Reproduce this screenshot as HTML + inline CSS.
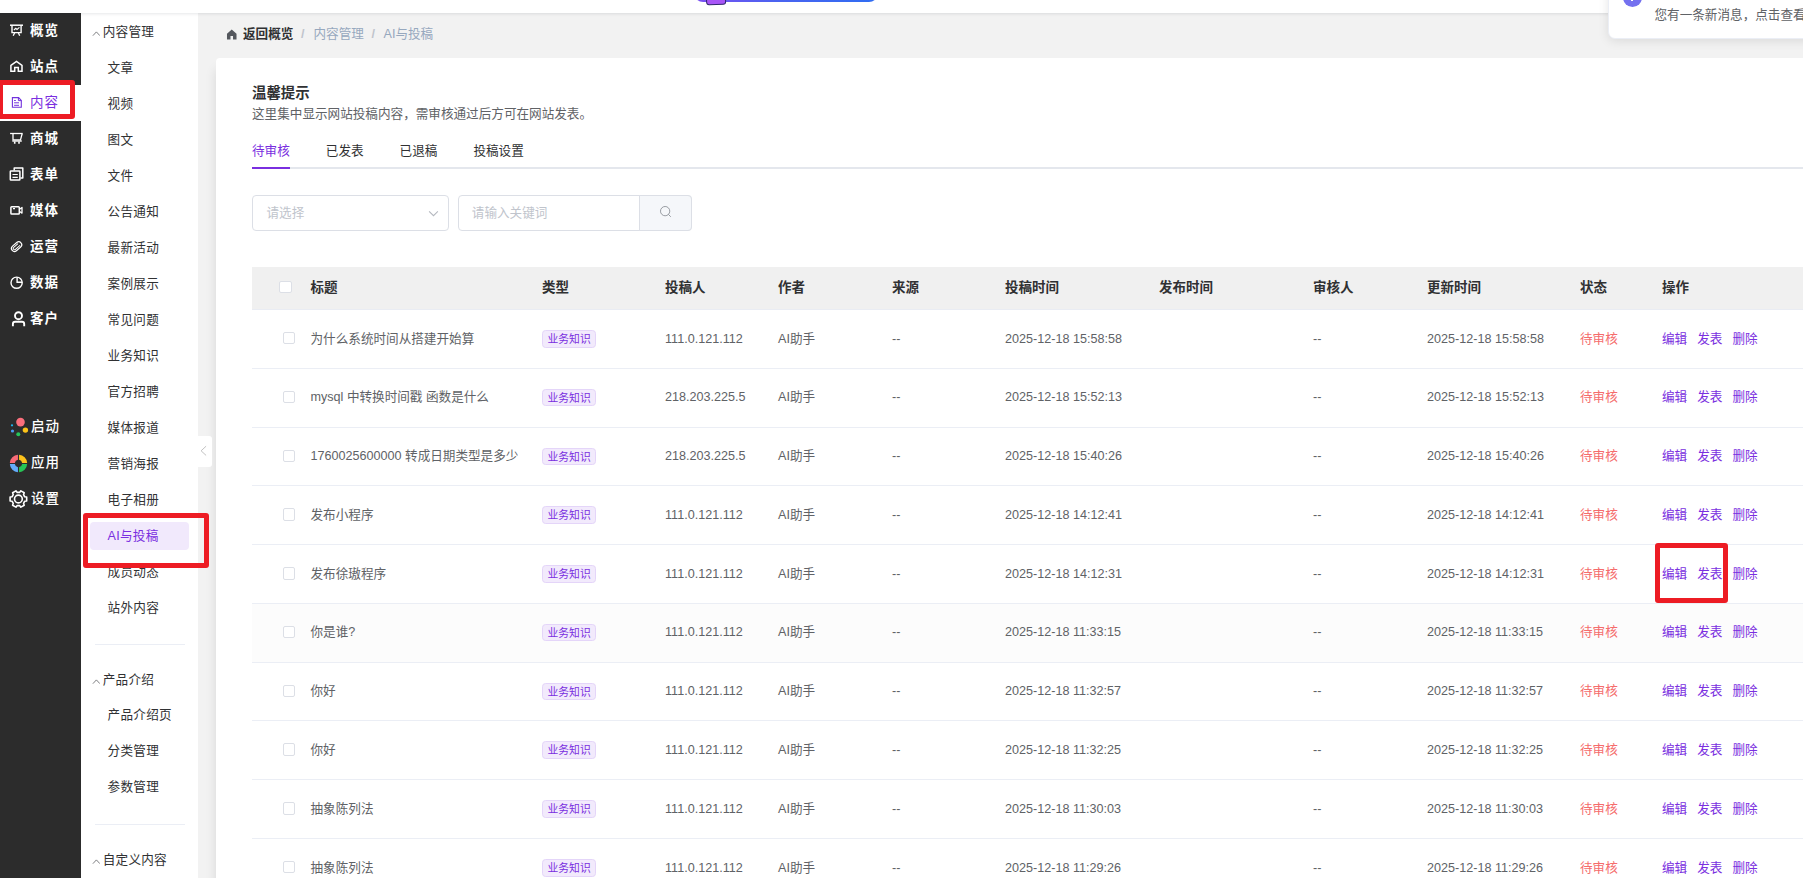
<!DOCTYPE html>
<html lang="zh-CN">
<head>
<meta charset="utf-8">
<title>AI与投稿</title>
<style>
*{box-sizing:border-box;margin:0;padding:0}
html,body{width:1803px;height:878px;overflow:hidden}
body{position:relative;background:#f2f2f2;font-family:"Liberation Sans","Noto Sans CJK SC",sans-serif;font-size:12.6px;color:#606266;}
.abs{position:absolute}
/* top strip */
#top{position:absolute;left:0;top:0;width:1803px;height:13px;background:#fff;box-shadow:0 1px 3px rgba(0,21,41,.1);z-index:5}
#pill{position:absolute;left:694px;top:-22px;width:184px;height:23.6px;border-radius:9px;background:linear-gradient(90deg,#7b4ff2 0%,#4a63f0 45%,#2f6df2 100%)}
#pillsq{position:absolute;left:706px;top:-8px;width:20px;height:13px;border-radius:3px;background:#a855f7;border:1.6px solid #2f2570;transform:rotate(-2deg)}
/* primary sidebar */
#side1{position:absolute;left:0;top:13px;width:81px;height:865px;background:#2c2c2c;z-index:2}
.m1{position:absolute;left:0;width:81px;height:36px;color:#fff;font-size:13.5px;font-weight:700;line-height:36px;letter-spacing:.9px}
.m1 span{position:absolute;left:30px;top:0;white-space:nowrap}
.m1 svg{position:absolute;left:0;top:0;width:81px;height:36px}
.m1 span.md{font-weight:500;left:31px}
.m1.on{background:#fff;color:#7a2fe0;font-weight:400}
/* secondary sidebar */
#side2{position:absolute;left:81px;top:13px;width:117px;height:865px;background:#fff;z-index:1}
.g{position:absolute;left:21.7px;letter-spacing:.25px;font-size:12.6px;color:#303133;line-height:18px;white-space:nowrap}
.g svg{position:absolute;left:-11px;top:7.6px;width:8.8px;height:5.4px}
.m2{position:absolute;left:26.6px;letter-spacing:.25px;font-size:12.6px;color:#303133;line-height:18px;white-space:nowrap;margin-top:.5px}
.hr2{position:absolute;left:14px;width:90px;height:1px;background:#ebeef5}
#act2{position:absolute;left:9px;top:509px;width:99px;height:28px;border-radius:4px;background:#f1e9fc}
.red{position:absolute;border:5px solid #ed1c24;border-radius:3px;z-index:9}

/* main */
#main{position:absolute;left:198px;top:13px;width:1605px;height:865px}
#crumb{position:absolute;left:28px;top:12px;height:18px;line-height:18px;font-size:12.6px;white-space:nowrap}
#crumb .home{position:absolute;left:0;top:4px;width:11.5px;height:11px}
#crumb span{position:absolute;top:0}
#crumb .c0{left:17px;font-weight:700;color:#303133}
#crumb .c1{color:#97a8be}
#crumb .sep{color:#c0c4cc;font-weight:700}
#card{position:absolute;left:18px;top:45px;width:1700px;height:900px;background:#fff;border-radius:4px;box-shadow:0 11px 12px rgba(0,0,0,.11)}
#tip-t{position:absolute;left:36px;top:25px;font-size:14.4px;font-weight:700;color:#303133;line-height:20px;white-space:nowrap}
#tip-d{position:absolute;left:36px;top:47px;font-size:12.6px;color:#606266;line-height:18px;white-space:nowrap}
#tabs{position:absolute;left:36px;top:74px;width:1664px;height:37px}
.tab{position:absolute;top:9.5px;line-height:18px;color:#303133;white-space:nowrap}
.tab.on{color:#7a2fe0}
#tabline{position:absolute;left:0;top:35px;width:1664px;height:2px;background:#e4e7ed}
#tabbar{position:absolute;left:0;top:35px;width:38px;height:2px;background:#7a2fe0}
#sel{position:absolute;left:36px;top:137px;width:197px;height:36px;border:1px solid #dcdfe6;border-radius:4px;line-height:34px}
#sel span,#inp span{position:absolute;left:13.5px;top:0;color:#c0c4cc;white-space:nowrap}
#sel svg{position:absolute;right:9px;top:14px;width:11px;height:7px}
#inp{position:absolute;left:242px;top:137px;width:234px;height:36px;border:1px solid #dcdfe6;border-radius:4px;line-height:34px}
#sbtn{position:absolute;right:-1px;top:-1px;width:53px;height:36px;background:#f5f7fa;border:1px solid #dcdfe6;border-radius:0 4px 4px 0}
#sbtn svg{position:absolute;left:19px;top:9px;width:13px;height:13px}
#thead{position:absolute;left:36px;top:209px;width:1664px;height:43px;background:#f0f0f0;border-bottom:1px solid #e9ecf3}
#thead b{position:absolute;top:12px;line-height:18px;font-size:13.5px;color:#303133;font-weight:700;white-space:nowrap}
.cb{position:absolute;width:12.4px;height:12.4px;border:1px solid #dcdfe6;border-radius:2px;background:#fff}
.tr{position:absolute;left:36px;width:1664px;height:58.78px;border-bottom:1px solid #ebeef5}
.tr.hov{background:#fcfcfc}
.tr .cb{left:31px;top:22px}
.tr span,.tr a{position:absolute;top:19.5px;line-height:18px;white-space:nowrap;color:#606266}
.tr a{color:#7a2fe0}
.tr .st{color:#f56c6c}
.tr em{position:absolute;left:290px;top:20px;height:17.5px;padding:0 4.5px;font-style:normal;font-size:10.8px;line-height:16px;color:#7a2fe0;background:#f2eafc;border:1px solid #e4d5f9;border-radius:3.6px;white-space:nowrap}

#handle{position:absolute;left:198px;top:436px;width:14px;height:31px;background:#fff;border-radius:0 3px 3px 0;z-index:3}
#handle svg{position:absolute;left:2.2px;top:9px;width:7.4px;height:11.6px}
#notice{position:absolute;left:1608.3px;top:-30px;width:300px;height:68.5px;background:#fff;border:1px solid #ebeef5;border-radius:7px;box-shadow:0 2px 11px rgba(0,0,0,.1);z-index:8}
#nico{position:absolute;left:13.4px;top:16.5px;width:19px;height:19px;border-radius:50%;background:#7471ef}
#nico i{position:absolute;left:8.6px;top:9px;width:1.5px;height:4.6px;background:#fff}
#notice span{position:absolute;left:45.2px;top:35px;line-height:18px;color:#606266;white-space:nowrap}
</style>
</head>
<body>
<div id="top"><div id="pill"></div><div id="pillsq"></div></div>

<div id="side1">
  <div class="m1" style="top:0"><svg viewBox="0 0 81 36"><g stroke="#fff" fill="none" stroke-width="1.4"><path d="M10,12.2H23" stroke-width="1.5"/><path d="M12,12.2V19.6H21.1V12.2"/><path d="M13.9,17 15.8,15.3 17,16.4 19.4,14.3" stroke-width="1.1"/><path d="M14.7,19.8 13.2,22.8M18.3,19.8 19.7,22.8" stroke-width="1.3"/></g></svg><span>概览</span></div>
  <div class="m1" style="top:36px"><svg viewBox="0 0 81 36"><g stroke="#fff" fill="none" stroke-width="1.5"><path d="M10.9,22.2V16.3L16.5,12.3L22,16.3V22.2H18.3V18.4H14.7V22.2Z"/></g></svg><span>站点</span></div>
  <div class="m1 on" style="top:72px"><svg viewBox="0 0 81 36"><g stroke="#7232dd" fill="none" stroke-width="1.1"><path d="M12.4,12.6H18.6L21.3,15.4V22.3H12.4Z"/><path d="M18.4,12.6V15.6H21.3" stroke-width="1"/><path d="M14.1,15.5H15.8M14.1,17.8H19M14.1,20.3H19" stroke-width="1"/></g></svg><span>内容</span></div>
  <div class="m1" style="top:108px"><svg viewBox="0 0 81 36"><g stroke="#fff" fill="none" stroke-width="1.3"><path d="M10.1,12.5H22.6"/><path d="M13,12.5V18.9H20.5L22.2,12.5"/><path d="M12.3,20H21.8" stroke-width="1.4"/><path d="M14.7,20.4V22.8M19,20.4V22.8" stroke-width="1.6"/></g></svg><span>商城</span></div>
  <div class="m1" style="top:144px"><svg viewBox="0 0 81 36"><g stroke="#fff" fill="none" stroke-width="1.5" stroke-linejoin="round"><rect x="10.3" y="14" width="9.6" height="9" rx=".6"/><path d="M14.2,13.6V11.1H22.8V21H20.4"/><path d="M12.5,17.5H17.8M12.5,20.3H17.8" stroke-width="1.2"/></g></svg><span>表单</span></div>
  <div class="m1" style="top:180px"><svg viewBox="0 0 81 36"><g stroke="#fff" fill="none" stroke-width="1.5" stroke-linejoin="round"><rect x="10.9" y="10.7" width="8.4" height="7.4" rx=".8" transform="translate(0,3)"/><path d="M19.6,16.2 22,14.5V20.1L19.6,18.5" stroke-width="1.3"/><path d="M13,15.6H15" stroke-width="1.1"/></g></svg><span>媒体</span></div>
  <div class="m1" style="top:216px"><svg viewBox="0 0 81 36"><g stroke="#fff" fill="none" stroke-width="1.15" transform="rotate(-41 16.6 17.6)"><rect x="10.8" y="14.6" width="11.6" height="6" rx="3"/><path d="M19.6,16.3H13.9a1.3,1.3 0 0 0 0,2.6H20" stroke-width="1"/></g></svg><span>运营</span></div>
  <div class="m1" style="top:252px"><svg viewBox="0 0 81 36"><g stroke="#fff" fill="none" stroke-width="1.4"><circle cx="16.6" cy="17.7" r="5.6"/><path d="M17.1,12.3V17.3H22.3"/></g></svg><span>数据</span></div>
  <div class="m1" style="top:288px"><svg viewBox="0 0 81 36"><g stroke="#fff" fill="none" stroke-width="1.9"><circle cx="18.5" cy="14.7" r="3.5"/><path d="M12.9,25.3V23a2.2,2.2 0 0 1 2.2,-2.2H22a2.2,2.2 0 0 1 2.2,2.2V25.3"/></g></svg><span>客户</span></div>
  <div class="m1" style="top:396px"><svg viewBox="0 0 81 36"><circle cx="20.5" cy="13.1" r="4.3" fill="#fb6f7c"/><circle cx="25.4" cy="21.1" r="2.7" fill="#fcc419"/><circle cx="18.3" cy="25.3" r="2" fill="#24c45a"/><circle cx="12.5" cy="22" r="1.6" fill="#4c9cf5"/><circle cx="12" cy="16.3" r="1.1" fill="#1fb6f2"/></svg><span class="md">启动</span></div>
  <div class="m1" style="top:432px"><svg viewBox="0 0 81 36"><path d="M9.82,17.95 A8.7,8.7 0 0 1 17.95,9.82 L17.95,14.84 A3.7,3.7 0 0 0 14.84,17.95Z" fill="#f86b78"/><path d="M19.05,9.82 A8.7,8.7 0 0 1 27.18,17.95 L22.16,17.95 A3.7,3.7 0 0 0 19.05,14.84Z" fill="#fcc21b"/><path d="M27.18,19.05 A8.7,8.7 0 0 1 19.05,27.18 L19.05,22.16 A3.7,3.7 0 0 0 22.16,19.05Z" fill="#27c556"/><path d="M17.95,27.18 A8.7,8.7 0 0 1 9.82,19.05 L14.84,19.05 A3.7,3.7 0 0 0 17.95,22.16Z" fill="#64acfa"/></svg><span class="md">应用</span></div>
  <div class="m1" style="top:468px"><svg viewBox="0 0 81 36"><g stroke="#fff" fill="none" stroke-width="1.6" stroke-linejoin="round"><path d="M24.70,15.73 L26.68,16.06 L26.68,19.94 L24.70,20.27 L23.52,22.32 L24.22,24.20 L20.86,26.14 L19.59,24.59 L17.21,24.59 L15.94,26.14 L12.58,24.20 L13.28,22.32 L12.10,20.27 L10.12,19.94 L10.12,16.06 L12.10,15.73 L13.28,13.68 L12.58,11.80 L15.94,9.86 L17.21,11.41 L19.59,11.41 L20.86,9.86 L24.22,11.80 L23.52,13.68Z"/><circle cx="18.4" cy="18" r="3.9"/></g></svg><span class="md">设置</span></div>
</div>

<div id="side2">
  <div id="act2"></div>
  <div class="g" style="top:10px"><svg viewBox="0 0 9 6"><path d="M.6,5.2 4.5,1 8.4,5.2" fill="none" stroke="#606266" stroke-width=".9"/></svg>内容管理</div>
  <div class="m2" style="top:45px">文章</div>
  <div class="m2" style="top:81px">视频</div>
  <div class="m2" style="top:117px">图文</div>
  <div class="m2" style="top:153px">文件</div>
  <div class="m2" style="top:189px">公告通知</div>
  <div class="m2" style="top:225px">最新活动</div>
  <div class="m2" style="top:261px">案例展示</div>
  <div class="m2" style="top:297px">常见问题</div>
  <div class="m2" style="top:333px">业务知识</div>
  <div class="m2" style="top:369px">官方招聘</div>
  <div class="m2" style="top:405px">媒体报道</div>
  <div class="m2" style="top:441px">营销海报</div>
  <div class="m2" style="top:477px">电子相册</div>
  <div class="m2" style="top:513px;color:#7a2fe0">AI与投稿</div>
  <div class="m2" style="top:549px">成员动态</div>
  <div class="m2" style="top:585px">站外内容</div>
  <div class="hr2" style="top:631px"></div>
  <div class="g" style="top:658px"><svg viewBox="0 0 9 6"><path d="M.6,5.2 4.5,1 8.4,5.2" fill="none" stroke="#606266" stroke-width=".9"/></svg>产品介绍</div>
  <div class="m2" style="top:692px">产品介绍页</div>
  <div class="m2" style="top:728px">分类管理</div>
  <div class="m2" style="top:764px">参数管理</div>
  <div class="hr2" style="top:811px"></div>
  <div class="g" style="top:838px"><svg viewBox="0 0 9 6"><path d="M.6,5.2 4.5,1 8.4,5.2" fill="none" stroke="#606266" stroke-width=".9"/></svg>自定义内容</div>
</div>

<div id="main">
  <div id="crumb">
    <svg class="home" viewBox="0 0 12 12"><path d="M6 .6 11.2 5.2V11.4H7.4V7.6H4.6V11.4H.8V5.2Z" fill="#55585e"/></svg>
    <span class="c0">返回概览</span><span class="sep" style="left:75px">/</span><span class="c1" style="left:87.5px">内容管理</span><span class="sep" style="left:145.5px">/</span><span class="c1" style="left:157.5px">AI与投稿</span>
  </div>
  <div id="card">
    <div id="tip-t">温馨提示</div>
    <div id="tip-d">这里集中显示网站投稿内容，需审核通过后方可在网站发表。</div>
    <div id="tabs">
      <span class="tab on" style="left:0">待审核</span>
      <span class="tab" style="left:73.8px">已发表</span>
      <span class="tab" style="left:147.6px">已退稿</span>
      <span class="tab" style="left:221.4px">投稿设置</span>
      <div id="tabline"></div><div id="tabbar"></div>
    </div>
    <div id="sel"><span>请选择</span><svg viewBox="0 0 12 8"><path d="M1 1.5 6 6.5 11 1.5" fill="none" stroke="#b4b8bf" stroke-width="1.2"/></svg></div>
    <div id="inp"><span style="left:12.8px">请输入关键词</span><div id="sbtn"><svg viewBox="0 0 14 14"><circle cx="6.6" cy="6.6" r="5" fill="none" stroke="#90949b" stroke-width="1"/><path d="M10.3 10.3 12.4 12.4" stroke="#90949b" stroke-width="1" stroke-linecap="round"/></svg></div></div>
    <div id="thead">
      <i class="cb" style="left:27px;top:14px;width:12.8px"></i>
      <b style="left:58.5px">标题</b><b style="left:290px">类型</b><b style="left:413px">投稿人</b><b style="left:526px">作者</b><b style="left:640px">来源</b><b style="left:753px">投稿时间</b><b style="left:907px">发布时间</b><b style="left:1061px">审核人</b><b style="left:1175px">更新时间</b><b style="left:1328px">状态</b><b style="left:1410px">操作</b>
    </div>
    <div class="tr" style="top:252.00px"><i class="cb"></i><span style="left:58.5px">为什么系统时间从搭建开始算</span><em>业务知识</em><span style="left:413px">111.0.121.112</span><span style="left:526px">AI助手</span><span style="left:640px">--</span><span style="left:753px">2025-12-18 15:58:58</span><span style="left:1061px">--</span><span style="left:1175px">2025-12-18 15:58:58</span><span class="st" style="left:1328px">待审核</span><a style="left:1410px">编辑</a><a style="left:1445.2px">发表</a><a style="left:1480.4px">删除</a></div>
    <div class="tr" style="top:310.78px"><i class="cb"></i><span style="left:58.5px">mysql 中转换时间戳 函数是什么</span><em>业务知识</em><span style="left:413px">218.203.225.5</span><span style="left:526px">AI助手</span><span style="left:640px">--</span><span style="left:753px">2025-12-18 15:52:13</span><span style="left:1061px">--</span><span style="left:1175px">2025-12-18 15:52:13</span><span class="st" style="left:1328px">待审核</span><a style="left:1410px">编辑</a><a style="left:1445.2px">发表</a><a style="left:1480.4px">删除</a></div>
    <div class="tr" style="top:369.56px"><i class="cb"></i><span style="left:58.5px">1760025600000 转成日期类型是多少</span><em>业务知识</em><span style="left:413px">218.203.225.5</span><span style="left:526px">AI助手</span><span style="left:640px">--</span><span style="left:753px">2025-12-18 15:40:26</span><span style="left:1061px">--</span><span style="left:1175px">2025-12-18 15:40:26</span><span class="st" style="left:1328px">待审核</span><a style="left:1410px">编辑</a><a style="left:1445.2px">发表</a><a style="left:1480.4px">删除</a></div>
    <div class="tr" style="top:428.34px"><i class="cb"></i><span style="left:58.5px">发布小程序</span><em>业务知识</em><span style="left:413px">111.0.121.112</span><span style="left:526px">AI助手</span><span style="left:640px">--</span><span style="left:753px">2025-12-18 14:12:41</span><span style="left:1061px">--</span><span style="left:1175px">2025-12-18 14:12:41</span><span class="st" style="left:1328px">待审核</span><a style="left:1410px">编辑</a><a style="left:1445.2px">发表</a><a style="left:1480.4px">删除</a></div>
    <div class="tr" style="top:487.12px"><i class="cb"></i><span style="left:58.5px">发布徐璈程序</span><em>业务知识</em><span style="left:413px">111.0.121.112</span><span style="left:526px">AI助手</span><span style="left:640px">--</span><span style="left:753px">2025-12-18 14:12:31</span><span style="left:1061px">--</span><span style="left:1175px">2025-12-18 14:12:31</span><span class="st" style="left:1328px">待审核</span><a style="left:1410px">编辑</a><a style="left:1445.2px">发表</a><a style="left:1480.4px">删除</a></div>
    <div class="tr hov" style="top:545.90px"><i class="cb"></i><span style="left:58.5px">你是谁?</span><em>业务知识</em><span style="left:413px">111.0.121.112</span><span style="left:526px">AI助手</span><span style="left:640px">--</span><span style="left:753px">2025-12-18 11:33:15</span><span style="left:1061px">--</span><span style="left:1175px">2025-12-18 11:33:15</span><span class="st" style="left:1328px">待审核</span><a style="left:1410px">编辑</a><a style="left:1445.2px">发表</a><a style="left:1480.4px">删除</a></div>
    <div class="tr" style="top:604.68px"><i class="cb"></i><span style="left:58.5px">你好</span><em>业务知识</em><span style="left:413px">111.0.121.112</span><span style="left:526px">AI助手</span><span style="left:640px">--</span><span style="left:753px">2025-12-18 11:32:57</span><span style="left:1061px">--</span><span style="left:1175px">2025-12-18 11:32:57</span><span class="st" style="left:1328px">待审核</span><a style="left:1410px">编辑</a><a style="left:1445.2px">发表</a><a style="left:1480.4px">删除</a></div>
    <div class="tr" style="top:663.46px"><i class="cb"></i><span style="left:58.5px">你好</span><em>业务知识</em><span style="left:413px">111.0.121.112</span><span style="left:526px">AI助手</span><span style="left:640px">--</span><span style="left:753px">2025-12-18 11:32:25</span><span style="left:1061px">--</span><span style="left:1175px">2025-12-18 11:32:25</span><span class="st" style="left:1328px">待审核</span><a style="left:1410px">编辑</a><a style="left:1445.2px">发表</a><a style="left:1480.4px">删除</a></div>
    <div class="tr" style="top:722.24px"><i class="cb"></i><span style="left:58.5px">抽象陈列法</span><em>业务知识</em><span style="left:413px">111.0.121.112</span><span style="left:526px">AI助手</span><span style="left:640px">--</span><span style="left:753px">2025-12-18 11:30:03</span><span style="left:1061px">--</span><span style="left:1175px">2025-12-18 11:30:03</span><span class="st" style="left:1328px">待审核</span><a style="left:1410px">编辑</a><a style="left:1445.2px">发表</a><a style="left:1480.4px">删除</a></div>
    <div class="tr" style="top:781.02px"><i class="cb"></i><span style="left:58.5px">抽象陈列法</span><em>业务知识</em><span style="left:413px">111.0.121.112</span><span style="left:526px">AI助手</span><span style="left:640px">--</span><span style="left:753px">2025-12-18 11:29:26</span><span style="left:1061px">--</span><span style="left:1175px">2025-12-18 11:29:26</span><span class="st" style="left:1328px">待审核</span><a style="left:1410px">编辑</a><a style="left:1445.2px">发表</a><a style="left:1480.4px">删除</a></div>
  </div>
</div>


<div id="handle"><svg viewBox="0 0 8 12"><path d="M6.6,1 1.2,6 6.6,11" fill="none" stroke="#bdbdbd" stroke-width="1"/></svg></div>
<div id="notice"><div id="nico"><i></i></div><span>您有一条新消息，点击查看</span></div>
<div class="red" style="left:-2px;top:80px;width:77px;height:39px"></div>
<div class="red" style="left:83px;top:513px;width:126px;height:55px"></div>
<div class="red" style="left:1655px;top:543px;width:73px;height:60px"></div>
</body>
</html>
